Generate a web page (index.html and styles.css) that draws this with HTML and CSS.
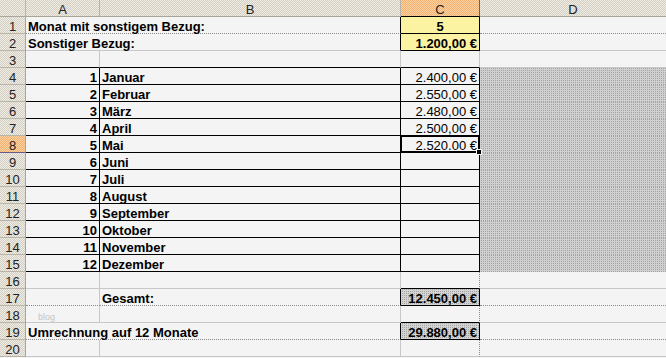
FILE: index.html
```html
<!DOCTYPE html>
<html lang="de">
<head>
<meta charset="utf-8">
<title>Sonstiger Bezug</title>
<link rel="stylesheet" href="styles.css">
</head>
<body>
<div class="sheet">
  <div class="hd corner"></div>
  <div class="hd">A</div>
  <div class="hd">B</div>
  <div class="hd sel">C</div>
  <div class="hd last">D</div>

  <div class="rh">1</div>
  <div class="c span b dot bk-r">Monat mit sonstigem Bezug:</div>
  <div class="c y b ctr bk">5</div>
  <div class="c last dot"></div>

  <div class="rh">2</div>
  <div class="c span b bk-r">Sonstiger Bezug:</div>
  <div class="c y b r bk">1.200,00 €</div>
  <div class="c last"></div>

  <div class="rh">3</div>
  <div class="c bk-b"></div>
  <div class="c bk-b"></div>
  <div class="c bk-b"></div>
  <div class="c last"></div>

  <div class="rh">4</div>
  <div class="c b r bk">1</div>
  <div class="c b bk">Januar</div>
  <div class="c r bk">2.400,00 €</div>
  <div class="c pat"></div>

  <div class="rh">5</div>
  <div class="c b r bk">2</div>
  <div class="c b bk">Februar</div>
  <div class="c r bk">2.550,00 €</div>
  <div class="c pat"></div>

  <div class="rh">6</div>
  <div class="c b r bk">3</div>
  <div class="c b bk">März</div>
  <div class="c r bk">2.480,00 €</div>
  <div class="c pat"></div>

  <div class="rh">7</div>
  <div class="c b r bk">4</div>
  <div class="c b bk">April</div>
  <div class="c r bk">2.500,00 €</div>
  <div class="c pat"></div>

  <div class="rh sel">8</div>
  <div class="c b r bk">5</div>
  <div class="c b bk">Mai</div>
  <div class="c r bk active">2.520,00 €</div>
  <div class="c pat"></div>

  <div class="rh">9</div>
  <div class="c b r bk">6</div>
  <div class="c b bk">Juni</div>
  <div class="c r bk"></div>
  <div class="c pat"></div>

  <div class="rh">10</div>
  <div class="c b r bk">7</div>
  <div class="c b bk">Juli</div>
  <div class="c r bk"></div>
  <div class="c pat"></div>

  <div class="rh">11</div>
  <div class="c b r bk">8</div>
  <div class="c b bk">August</div>
  <div class="c r bk"></div>
  <div class="c pat"></div>

  <div class="rh">12</div>
  <div class="c b r bk">9</div>
  <div class="c b bk">September</div>
  <div class="c r bk"></div>
  <div class="c pat"></div>

  <div class="rh">13</div>
  <div class="c b r bk">10</div>
  <div class="c b bk">Oktober</div>
  <div class="c r bk"></div>
  <div class="c pat"></div>

  <div class="rh">14</div>
  <div class="c b r bk">11</div>
  <div class="c b bk">November</div>
  <div class="c r bk"></div>
  <div class="c pat"></div>

  <div class="rh">15</div>
  <div class="c b r bk">12</div>
  <div class="c b bk">Dezember</div>
  <div class="c r bk"></div>
  <div class="c pat"></div>

  <div class="rh">16</div>
  <div class="c"></div>
  <div class="c"></div>
  <div class="c bk-b dotv"></div>
  <div class="c last"></div>

  <div class="rh">17</div>
  <div class="c dot"></div>
  <div class="c b dot bk-r">Gesamt:</div>
  <div class="c tot b r bk">12.450,00 €</div>
  <div class="c last dot"></div>

  <div class="rh">18</div>
  <div class="c"><span class="wm">blog</span></div>
  <div class="c"></div>
  <div class="c bk-b dotv"></div>
  <div class="c last"></div>

  <div class="rh">19</div>
  <div class="c span b dot bk-r">Umrechnung auf 12 Monate</div>
  <div class="c tot b r bk">29.880,00 €</div>
  <div class="c last dot"></div>

  <div class="rh">20</div>
  <div class="c"></div>
  <div class="c"></div>
  <div class="c dotv"></div>
  <div class="c last"></div>
</div>
</body>
</html>
```

FILE: styles.css
```css
html, body {
  margin: 0;
  padding: 0;
  background: #f4f4f4;
}

.sheet {
  display: grid;
  grid-template-columns: 26px 74px 301px 79px 1fr;
  grid-auto-rows: 17px;
  width: 666px;
  font-family: "Liberation Sans", Arial, sans-serif;
  font-size: 13px;
  line-height: 15px;
  color: #000;
}

.sheet > div {
  box-sizing: border-box;
  white-space: nowrap;
  overflow: visible;
  padding-top: 2px;
}

.hd {
  background: repeating-conic-gradient(#d2cec2 0 25%, #efede6 0 50%) 0 0 / 2px 2px;
  border-right: 1px solid #b8b4a8;
  border-bottom: 1px solid #a8a498;
  text-align: center;
  color: #222;
}

.hd.last {
  border-right: none;
}

.hd.sel {
  background: repeating-conic-gradient(#f3b06e 0 25%, #fcd3a4 0 50%) 0 0 / 2px 2px;
  border-right-color: #6a5a8a;
  border-bottom-color: #000;
}

.rh {
  background: repeating-conic-gradient(#d2cec2 0 25%, #efede6 0 50%) 0 0 / 2px 2px;
  border-right: 1px solid #a8a498;
  border-bottom: 1px solid #b8b4a8;
  text-align: center;
  color: #222;
}

.rh.sel {
  background: repeating-conic-gradient(#f3b06e 0 25%, #fcd3a4 0 50%) 0 0 / 2px 2px;
  border-bottom-color: #6a5a8a;
}

.c {
  background: #f4f4f4;
  border-right: 1px solid #c8c8c8;
  border-bottom: 1px solid #c8c8c8;
  padding-left: 2px;
  padding-right: 2px;
  position: relative;
}

.c.last {
  border-right: none;
}

.span {
  grid-column: span 2;
}

.b {
  font-weight: bold;
}

.r {
  text-align: right;
}

.ctr {
  text-align: center;
}

.dot {
  border-bottom: 1px dotted #8a8a8a;
}

.dotv {
  border-right: 1px dotted #8a8a8a;
}

.bk {
  border-right-color: #000;
  border-bottom-color: #000;
  border-right-style: solid;
  border-bottom-style: solid;
}

.bk-r {
  border-right: 1px solid #000;
}

.bk-b {
  border-bottom: 1px solid #000;
}

.y {
  background: #fbf3a2;
}

.pat {
  background: conic-gradient(#a4a4a4 0 25%, #d0d0d0 0) 0 0 / 2px 2px;
  border-right: none;
  border-bottom-color: transparent;
}

.tot {
  background: conic-gradient(#a4a4a4 0 25%, #d4d4d4 0) 0 0 / 2px 2px;
}

.active::after {
  content: "";
  position: absolute;
  left: -1px;
  top: -1px;
  right: -1px;
  bottom: -1px;
  border: 2px solid #000;
  box-shadow: inset 0 0 0 1px #f4f4f4;
  pointer-events: none;
}

.active::before {
  content: "";
  position: absolute;
  right: -3px;
  bottom: -3px;
  width: 4px;
  height: 4px;
  background: #000;
  border: 1px solid #f4f4f4;
  z-index: 2;
}

.wm {
  font-size: 9px;
  color: #c4c4c4;
  padding-left: 10px;
}
```
